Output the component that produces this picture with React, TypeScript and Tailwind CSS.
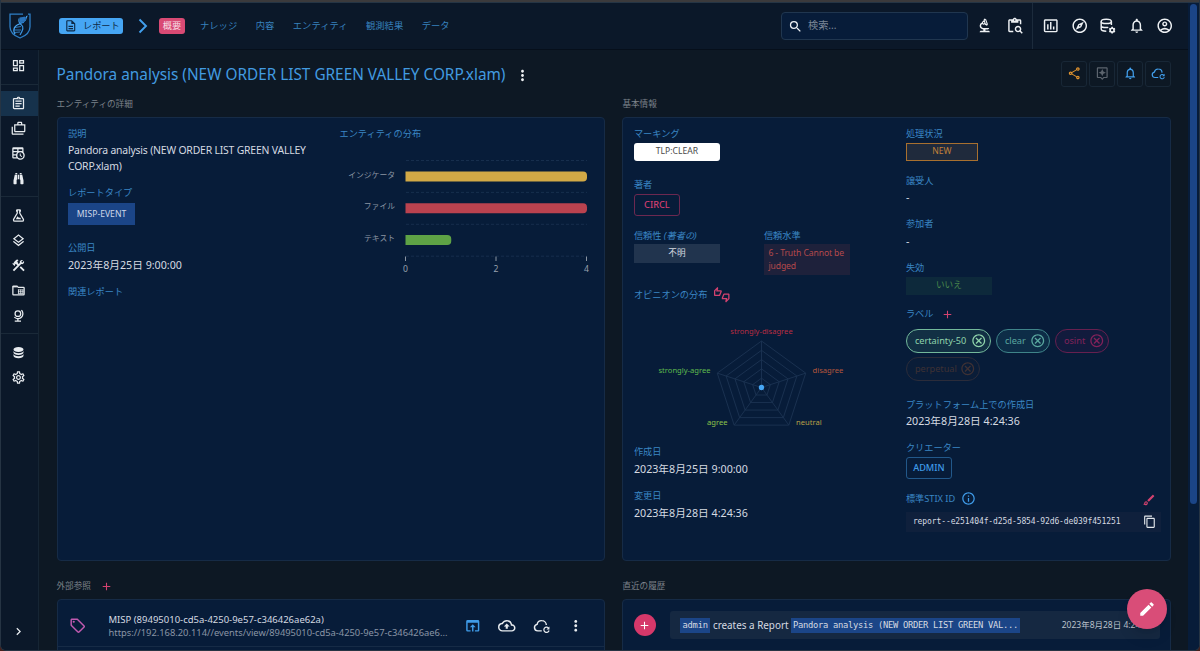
import React from 'react';
import {
  MdAdd,
  MdChevronRight,
  MdConstruction,
  MdContentCopy,
  MdEdit,
  MdInsertChartOutlined,
  MdMoreVert,
  MdOpenInBrowser,
  MdOutlineAccountCircle,
  MdOutlineAssignment,
  MdOutlineAssistant,
  MdOutlineBiotech,
  MdOutlineBrush,
  MdOutlineCancel,
  MdOutlineCases,
  MdOutlineCloudUpload,
  MdOutlineContentPasteSearch,
  MdOutlineDashboard,
  MdOutlineDescription,
  MdOutlineExplore,
  MdOutlineInfo,
  MdOutlineLayers,
  MdOutlineLocalOffer,
  MdOutlineNotifications,
  MdOutlineSettings,
  MdOutlineShare,
  MdOutlineThumbsUpDown,
  MdSearch,
} from 'react-icons/md';

type IconProps = { className?: string };
type BoxProps = { className?: string; children?: React.ReactNode };

const PathIcon = ({ d, className }: IconProps & { d: string }) => (
  <svg viewBox="0 0 24 24" fill="currentColor" className={className}>
    <path d={d} />
  </svg>
);

const Timetable = (props: IconProps) => (
  <PathIcon
    {...props}
    d="M14,12H15.5V14.82L17.94,16.23L17.19,17.53L14,15.69V12M4,2H18A2,2 0 0,1 20,4V10.1C21.24,11.36 22,13.09 22,15A7,7 0 0,1 15,22C13.09,22 11.36,21.24 10.1,20H4A2,2 0 0,1 2,18V4A2,2 0 0,1 4,2M4,15V18H8.67C8.24,17.09 8,16.07 8,15H4M4,8H10V5H4V8M18,8V5H12V8H18M4,13H8.29C8.63,11.85 9.26,10.82 10.1,10H4V13M15,10.15A4.85,4.85 0 0,0 10.15,15C10.15,17.68 12.32,19.85 15,19.85A4.85,4.85 0 0,0 19.85,15C19.85,12.32 17.68,10.15 15,10.15Z"
  />
);

const Binoculars = (props: IconProps) => (
  <PathIcon
    {...props}
    d="M11,6H13V13H11V6M9,20A1,1 0 0,1 8,21H5A1,1 0 0,1 4,20V15L6,6H10V13A1,1 0 0,1 9,14V20M10,5H7V3H10V5M15,20V14A1,1 0 0,1 14,13V6H18L20,15V20A1,1 0 0,1 19,21H16A1,1 0 0,1 15,20M14,5V3H17V5H14Z"
  />
);

const Flask = (props: IconProps) => (
  <PathIcon
    {...props}
    d="M5,19A1,1 0 0,0 6,20H18A1,1 0 0,0 19,19C19,18.79 18.93,18.59 18.82,18.43L13,8.35V4H11V8.35L5.18,18.43C5.07,18.59 5,18.79 5,19M6,22A3,3 0 0,1 3,19C3,18.4 3.18,17.84 3.5,17.37L9,7.81V6A1,1 0 0,1 8,5V4A2,2 0 0,1 10,2H14A2,2 0 0,1 16,4V5A1,1 0 0,1 15,6V7.81L20.5,17.37C20.82,17.84 21,18.4 21,19A3,3 0 0,1 18,22H6M13,16L14.34,14.66L16.27,18H7.73L10.39,13.39L13,16Z"
  />
);

const GlobeModel = (props: IconProps) => (
  <PathIcon
    {...props}
    d="M17.36,2.64L15.95,4.06C17.26,5.37 18,7.14 18,9A7,7 0 0,1 11,16C9.15,16 7.37,15.26 6.06,13.95L4.64,15.36C6.08,16.8 7.97,17.71 10,17.93V20H6V22H16V20H12V17.94C16.55,17.43 20,13.58 20,9C20,6.62 19.05,4.33 17.36,2.64M11,3.5A5.5,5.5 0 0,0 5.5,9A5.5,5.5 0 0,0 11,14.5A5.5,5.5 0 0,0 16.5,9A5.5,5.5 0 0,0 11,3.5M11,5.5C12.94,5.5 14.5,7.07 14.5,9A3.5,3.5 0 0,1 11,12.5A3.5,3.5 0 0,1 7.5,9A3.5,3.5 0 0,1 11,5.5Z"
  />
);

const Database = (props: IconProps) => (
  <PathIcon
    {...props}
    d="M12,3C7.58,3 4,4.79 4,7C4,9.21 7.58,11 12,11C16.42,11 20,9.21 20,7C20,4.79 16.42,3 12,3M4,9V12C4,14.21 7.58,16 12,16C16.42,16 20,14.21 20,12V9C20,11.21 16.42,13 12,13C7.58,13 4,11.21 4,9M4,14V17C4,19.21 7.58,21 12,21C16.42,21 20,19.21 20,17V14C20,16.21 16.42,18 12,18C7.58,18 4,16.21 4,14Z"
  />
);

const FolderTable = ({ className }: IconProps) => (
  <svg viewBox="0 0 24 24" fill="none" stroke="currentColor" strokeWidth="2" className={className}>
    <path d="M3 18V6a1 1 0 0 1 1-1h5.6l2 2H20a1 1 0 0 1 1 1v10a1 1 0 0 1-1 1H4a1 1 0 0 1-1-1z" />
    <path d="M2.5 6h7" />
    <path d="M12 10.5v6.5M15.5 10.5v6.5M19 10.5v6.5M11 11h9M11 14h9M11 17h9" strokeWidth="1.3" />
  </svg>
);

const DatabaseCog = ({ className }: IconProps) => (
  <svg viewBox="0 0 24 24" fill="none" stroke="currentColor" strokeWidth="2" className={className}>
    <ellipse cx="10" cy="6" rx="7" ry="3" />
    <path d="M3 6v10.5c0 1.6 3 3 7 3M17 6v5M3 11.5c0 1.6 3 3 7 3 1 0 2-.1 2.8-.3" />
    <circle cx="18" cy="18" r="2.6" />
    <path
      d="M18 13.5v2M18 20.5v2M14.1 15.75l1.7 1M20.2 19.25l1.7 1M14.1 20.25l1.7-1M20.2 16.75l1.7-1"
      strokeWidth="2.2"
    />
  </svg>
);

const CloudRefresh = ({ className }: IconProps) => (
  <svg viewBox="0 0 24 24" fill="none" stroke="currentColor" strokeWidth="2" className={className}>
    <path d="M12 19H6.5a4.5 4.5 0 0 1-.9-8.900A6.3 6.3 0 0 1 12 5a6.3 6.3 0 0 1 6.3 6" />
    <path d="M21.3 15.3A3.6 3.6 0 1 0 22 18.5" strokeWidth="1.7" />
    <path d="M22.5 13v4h-4z" fill="currentColor" stroke="none" />
  </svg>
);

const Logo = () => (
  <svg viewBox="0 0 22 26" fill="none" className="h-[26px] w-[22px]">
    <path d="M14 1.2H1v12.600C1 19 5.5 23 11 25c5.5-2 10-6 10-11.200V1.2h-2" stroke="#2f7fc6" strokeWidth="1.3" />
    <path d="M18.5 3C17 3 17.5 5 16 7.5c-1.5 3-8.5 3-10.5 7-1.2 2.5-.7 4.5.5 6.5" stroke="#4aa8f5" strokeWidth="1.2" />
    <path d="M10 5.5c-.5 3 .3 5 2.5 6.5s1 6-1.5 10" stroke="#3a93df" strokeWidth="1.2" />
    <path d="M10.5 5l5-1.5c1.5.5 2 2 1.5 3.5L14 10.5l-3-1z" fill="#1f5fa3" />
    <path d="M10.5 5h6M10.5 7h6M11 9l4 .3M6 14.5l6-1M5 17h7M5.5 19.5l5.5-.5" stroke="#3a93df" strokeWidth=".8" />
  </svg>
);

const Label = ({ className = '', children }: BoxProps) => (
  <h3 className={`h-3.5 whitespace-nowrap text-[9.2px] leading-[14px] text-[#3a86c4] ${className}`}>{children}</h3>
);

const Value = ({ className = '', children }: BoxProps) => (
  <div className={`h-4 whitespace-nowrap text-[10.7px] leading-4 text-[#d5dae1] ${className}`}>{children}</div>
);

const Card = ({ className = '', children }: BoxProps) => (
  <div className={`rounded-[4px] border border-[#162b46] bg-[#071c39] ${className}`}>{children}</div>
);

const SectionTitle = ({ children }: BoxProps) => (
  <h2 className="flex h-4 items-center text-[8.6px] leading-4 text-[#7c828a]">{children}</h2>
);

const navGroups = [
  {
    className: 'h-[34px] pt-[3px]',
    items: [{ icon: MdOutlineDashboard }],
  },
  {
    className: 'h-[112px] border-t border-[#1a2938] pt-[6px]',
    items: [
      { icon: MdOutlineAssignment, active: true },
      { icon: MdOutlineCases },
      { icon: Timetable },
      { icon: Binoculars },
    ],
  },
  {
    className: 'h-[137px] border-t border-[#1a2938] pt-[6px]',
    items: [
      { icon: Flask },
      { icon: MdOutlineLayers },
      { icon: MdConstruction },
      { icon: FolderTable },
      { icon: GlobeModel },
    ],
  },
  {
    className: 'border-t border-[#1a2938] pt-[6px]',
    items: [{ icon: Database }, { icon: MdOutlineSettings }],
  },
] as { className: string; items: { icon: React.ElementType; active?: boolean }[] }[];

const tabs = ['ナレッジ', '内容', 'エンティティ', '観測結果', 'データ'];

const Header = () => (
  <header className="flex h-[47px] shrink-0 items-center border-b border-[#060f1b] bg-[#0b1829]">
    <div className="ml-[8px] w-[50px]">
      <Logo />
    </div>
    <div className="flex h-4 w-[64px] items-center rounded-[3px] bg-[#46a6f4] pl-[4.5px] text-[9.2px] text-[#0d2946]">
      <MdOutlineDescription className="mr-1.5 size-[13.5px]" />
      レポート
    </div>
    <svg viewBox="0 0 10 16" fill="none" className="ml-[15px] h-4 w-2.5">
      <path d="M1.5 1.5L8 8l-6.5 6.5" stroke="#42a0ee" strokeWidth="1.9" />
    </svg>
    <div className="ml-[11px] flex h-4 w-[26px] items-center justify-center rounded-[3px] bg-[#d94a74] text-[9.2px] text-[#f6dce4]">
      概要
    </div>
    <nav className="ml-[15px] flex gap-[18.5px] text-[9.3px] text-[#3781bd]">
      {tabs.map((tab) => (
        <span key={tab}>{tab}</span>
      ))}
    </nav>
    <div className="ml-auto flex h-7 w-[187px] items-center rounded-[4px] border border-[#20364f] bg-[#071c39] pl-[6px] text-[10.2px] text-[#7b8797]">
      <MdSearch className="mr-[5px] size-[15px] text-[#eef1f4]" />
      検索...
    </div>
    <div className="ml-[8px] flex items-center gap-[12px] pr-[9px] text-[#eef1f4]">
      <MdOutlineBiotech className="size-[17.5px]" />
      <MdOutlineContentPasteSearch className="size-[17.5px]" />
    </div>
    <div className="flex h-[46px] items-center gap-[11px] border-l border-[#1c2b3c] pr-[14.5px] pl-[9px] text-[#eef1f4]">
      <MdInsertChartOutlined className="size-[17.5px]" />
      <MdOutlineExplore className="size-[17.5px]" />
      <DatabaseCog className="size-[17.5px]" />
      <MdOutlineNotifications className="size-[17.5px]" />
      <MdOutlineAccountCircle className="size-[17.5px]" />
    </div>
  </header>
);

const Sidebar = () => (
  <aside className="flex w-[38px] shrink-0 flex-col border-r border-[#162534] bg-[#0b1829] text-[#e8ecf0]">
    {navGroups.map((group, i) => (
      <div key={i} className={group.className}>
        {group.items.map(({ icon: Icon, active }, j) => (
          <div key={j} className={`flex h-[25.1px] items-center justify-center pr-[2px] ${active ? 'bg-[#16324c]' : ''}`}>
            <Icon className="size-[15px]" />
          </div>
        ))}
      </div>
    ))}
    <div className="mt-auto mb-[11px] flex justify-center pr-[2px]">
      <MdChevronRight className="size-[15px]" />
    </div>
  </aside>
);

const bars = [
  { name: 'インジケータ', value: 4, color: '#d2a946' },
  { name: 'ファイル', value: 4, color: '#ba424f' },
  { name: 'テキスト', value: 1, color: '#5ea245' },
];

const DistributionChart = () => (
  <svg width="254" height="136" viewBox="0 0 254 136" className="mt-1 block">
    {[0, 1, 2, 3].map((i) => (
      <line key={i} x1="66" x2="247" y1={15.5 + i * 31.9} y2={15.5 + i * 31.9} stroke="#172e4d" strokeDasharray="3 2" />
    ))}
    {bars.map((bar, i) => {
      const w = bar.value * 45.25;
      const y = 26.5 + i * 31.8;
      return (
        <g key={bar.name}>
          <text x="55" y={y + 6} textAnchor="end" fontSize="7.8" fill="#8b95a3">{bar.name}</text>
          <path d={`M65.5 ${y}h${w - 3.5}q4 0 4 4v2q0 4 -4 4h-${w - 3.5}z`} fill={bar.color} />
        </g>
      );
    })}
    {[0, 2, 4].map((n) => (
      <g key={n}>
        <line x1={65.5 + n * 45.25} x2={65.5 + n * 45.25} y1="111.5" y2="116" stroke="#8b95a3" />
        <text x={65.5 + n * 45.25} y="127" textAnchor="middle" fontSize="8.6" fill="#98a2ae">{n}</text>
      </g>
    ))}
  </svg>
);

const radarLabels = [
  { name: 'strongly-disagree', x: 127.5, y: 29, anchor: 'middle', color: '#b92d43' },
  { name: 'disagree', x: 178.5, y: 68, anchor: 'start', color: '#b5573c' },
  { name: 'neutral', x: 162, y: 120, anchor: 'start', color: '#b9a048' },
  { name: 'agree', x: 93.5, y: 120, anchor: 'end', color: '#8bc34a' },
  { name: 'strongly-agree', x: 76.5, y: 68, anchor: 'end', color: '#5fbb4e' },
] as const;

const radarPoint = (i: number, r: number) => {
  const a = ((-90 + i * 72) * Math.PI) / 180;
  return `${127.5 + r * Math.cos(a)},${82.5 + r * Math.sin(a)}`;
};

const OpinionRadar = () => (
  <svg width="256" height="143" viewBox="0 0 256 143" className="block">
    <g stroke="#1c3352" strokeWidth="0.9" fill="none">
      {[1, 2, 3, 4, 5].map((n) => (
        <polygon key={n} points={[0, 1, 2, 3, 4].map((i) => radarPoint(i, n * 9.3)).join(' ')} />
      ))}
      {[0, 1, 2, 3, 4].map((i) => (
        <polyline key={i} points={`127.5,82.5 ${radarPoint(i, 46.5)}`} />
      ))}
    </g>
    <circle cx="127.5" cy="82.5" r="2.7" fill="#46a6f4" />
    {radarLabels.map((l) => (
      <text key={l.name} x={l.x} y={l.y} textAnchor={l.anchor} fontSize="7.6" fill={l.color}>{l.name}</text>
    ))}
  </svg>
);

const labels = [
  { name: 'certainty-50', className: 'w-[85px] border-[#73b99b] bg-[#123044] text-[#8fd3ab]' },
  { name: 'clear', className: 'w-[54px] border-[#3f8489] bg-[#0d2d47] text-[#5aa79f]' },
  { name: 'osint', className: 'w-[54px] border-[#66204f] bg-[#121b3d] text-[#82225a]' },
  { name: 'perpetual', className: 'w-[74px] border-[#2b2c3a] bg-[#0a1d38] text-[#3e3134]' },
];

const EntityDetails = () => (
  <Card className="flex h-[444px] pt-[9px] pl-[10.5px]">
    <div className="w-[271.5px]">
      <Label>説明</Label>
      <p className="mt-0.5 w-[250px] text-[10.4px] leading-[15.5px] tracking-[-0.18px] text-[#d5dae1]">
        Pandora analysis (NEW ORDER LIST GREEN VALLEY CORP.xlam)
      </p>
      <Label className="mt-3">レポートタイプ</Label>
      <div className="mt-[3px] flex h-[22px] w-[67px] items-center justify-center bg-[#1b4587] text-[8.6px] text-[#ccd7e8]">
        MISP-EVENT
      </div>
      <Label className="mt-4">公開日</Label>
      <Value className="mt-0.5">2023年8月25日 9:00:00</Value>
      <Label className="mt-3">関連レポート</Label>
    </div>
    <div>
      <Label>エンティティの分布</Label>
      <DistributionChart />
    </div>
  </Card>
);

const BasicInformation = () => (
  <Card className="flex h-[444px] pt-[9px] pl-[10.5px]">
    <div className="w-[272px]">
      <Label>マーキング</Label>
      <div className="mt-[1.5px] flex h-[18px] w-[86px] items-center justify-center rounded-[3px] bg-white text-[8.6px] text-[#4a4a4a]">
        TLP:CLEAR
      </div>
      <Label className="mt-[17.5px]">著者</Label>
      <div className="mt-0.5 flex h-[22px] w-[46px] items-center justify-center rounded-[3px] border border-[#6c2850] text-[9.2px] font-medium text-[#cf3e70]">
        CIRCL
      </div>
      <div className="mt-[13px] flex h-[59px]">
        <div className="w-[130px]">
          <Label>信頼性 <i>(著者の)</i></Label>
          <div className="mt-px flex h-[19px] w-[86px] items-center justify-center bg-[#21344e] text-[8.6px] text-[#d5dae1]">
            不明
          </div>
        </div>
        <div>
          <Label>信頼水準</Label>
          <div className="mt-px h-[31px] w-[86px] bg-[#1e213b] pt-[3px] pl-[4.5px] text-[8.6px] leading-[13px] tracking-[-0.1px] text-[#b5494b]">
            6 - Truth Cannot be judged
          </div>
        </div>
      </div>
      <div className="flex h-3.5 items-center">
        <Label>オピニオンの分布</Label>
        <MdOutlineThumbsUpDown className="ml-[7px] size-[15.5px] text-[#d3426f]" />
      </div>
      <div className="mt-[3px] h-[140px]">
        <OpinionRadar />
      </div>
      <Label>作成日</Label>
      <Value className="mt-0.5">2023年8月25日 9:00:00</Value>
      <Label className="mt-3">変更日</Label>
      <Value className="mt-0.5">2023年8月28日 4:24:36</Value>
    </div>
    <div className="w-[255px]">
      <Label>処理状況</Label>
      <div className="mt-[1.5px] flex h-[18px] w-[72px] items-center justify-center border border-[#a8702f] bg-[#1f2a3c] text-[8.6px] text-[#c0803a]">
        NEW
      </div>
      <Label className="mt-[13px]">譲受人</Label>
      <Value className="mt-[1.5px]">-</Value>
      <Label className="mt-3">参加者</Label>
      <Value className="mt-0.5">-</Value>
      <Label className="mt-3">失効</Label>
      <div className="mt-[1.5px] flex h-[18px] w-[86px] items-center justify-center bg-[#0d293b] text-[8.6px] text-[#4c8a4c]">
        いいえ
      </div>
      <div className="mt-[12.5px] flex h-3.5 items-center">
        <Label>ラベル</Label>
        <MdAdd className="ml-[8px] size-[13px] text-[#d3426f]" />
      </div>
      <div className="mt-2 flex flex-wrap gap-x-[5px] gap-y-[4.5px]">
        {labels.map((label) => (
          <div
            key={label.name}
            className={`flex h-[23.5px] items-center justify-between rounded-full border pr-[3px] pl-2 text-[9.2px] ${label.className}`}
          >
            {label.name}
            <MdOutlineCancel className="size-[15.5px]" />
          </div>
        ))}
      </div>
      <Label className="mt-[17px]">プラットフォーム上での作成日</Label>
      <Value className="mt-[1.5px]">2023年8月28日 4:24:36</Value>
      <Label className="mt-[11.5px]">クリエーター</Label>
      <div className="mt-0.5 flex h-[22px] w-[46px] items-center justify-center rounded-[3px] border border-[#22588a] text-[9.2px] font-medium text-[#3f9be8]">
        ADMIN
      </div>
      <div className="mt-[13px] flex h-3.5 items-center">
        <Label>標準STIX ID</Label>
        <MdOutlineInfo className="ml-[6px] size-[15px] text-[#3f9be8]" />
        <MdOutlineBrush className="mt-[3px] mr-[5px] ml-auto size-[14px] text-[#d3426f]" />
      </div>
      <div className="mt-[6px] flex h-5 items-center justify-between bg-[#0f203c] pr-[4px] pl-[7px]">
        <code className="font-['DejaVu_Sans_Mono',monospace] text-[8px] tracking-[-0.1px] text-[#d5dae1]">
          report--e251404f-d25d-5854-92d6-de039f451251
        </code>
        <MdContentCopy className="size-[13.5px] text-[#e3e7ec]" />
      </div>
    </div>
  </Card>
);

const ExternalReferences = () => (
  <Card className="h-20">
    <div className="flex h-[47px] items-center border-b border-[#162b46] pt-[5px] pr-[19.5px] pl-[11px]">
      <MdOutlineLocalOffer className="size-[17.5px] text-[#c05ab0]" />
      <div className="ml-[22.5px] w-[344px] whitespace-nowrap">
        <div className="text-[9.5px] leading-[13px] text-[#d5dae1]">MISP (89495010-cd5a-4250-9e57-c346426ae62a)</div>
        <div className="text-[9.35px] leading-[13px] text-[#8a95a5]">
          https://192.168.20.114//events/view/89495010-cd5a-4250-9e57-c346426ae6...
        </div>
      </div>
      <div className="ml-auto flex items-center gap-[17px] pt-px text-[#e8ecf0]">
        <MdOpenInBrowser className="size-[17.5px] text-[#3f9be8]" />
        <MdOutlineCloudUpload className="size-[17.5px]" />
        <CloudRefresh className="size-[17.5px]" />
        <MdMoreVert className="size-[17.5px]" />
      </div>
    </div>
  </Card>
);

const RecentHistory = () => (
  <Card className="h-20 pt-[11px] pr-[10px] pl-[10.5px]">
    <div className="flex items-center">
      <div className="flex size-[22px] items-center justify-center rounded-full bg-[#d6386a] text-white">
        <MdAdd className="size-[13px]" />
      </div>
      <div className="ml-[14px] flex h-7 grow items-center rounded-[3px] bg-[#152841] pr-2 pl-[10px] text-[9.9px] whitespace-nowrap text-[#d5dae1]">
        <code className="bg-[#1b4587] px-[2.5px] font-['DejaVu_Sans_Mono',monospace] text-[8.8px] leading-[15px] tracking-[-0.2px]">
          admin
        </code>
        <span className="mx-[2.5px]">creates a Report</span>
        <code className="bg-[#1b4587] px-[2px] font-['DejaVu_Sans_Mono',monospace] text-[8.8px] leading-[15px] tracking-[-0.3px]">
          Pandora analysis (NEW ORDER LIST GREEN VAL...
        </code>
        <span className="ml-auto text-[8.5px] text-[#b9c1cb]">2023年8月28日 4:24:36</span>
      </div>
    </div>
  </Card>
);

const App: React.FC = () => {
  return (
    <div className="h-[651px] w-[1200px] overflow-hidden bg-[#47201c] font-['Noto_Sans','Noto_Sans_CJK_JP',sans-serif]">
      <div className="relative flex h-[651px] flex-col overflow-hidden rounded-b-[6px] border border-t-0 border-[#263443] bg-[#0d1824]">
        <div className="h-[3px] shrink-0 border-b border-[#253545] bg-[#3b3a3c]" />
        <div className="flex min-h-0 grow">
          <div className="flex min-w-0 grow flex-col">
            <Header />
            <div className="flex min-h-0 grow">
              <Sidebar />
              <main className="min-w-0 grow overflow-hidden pt-[10px] pr-[16.7px] pl-[17.5px]">
                <div className="flex h-[27px] items-center">
                  <h1 className="pt-[3px] text-[15.35px] whitespace-nowrap text-[#429be0]">
                    Pandora analysis (NEW ORDER LIST GREEN VALLEY CORP.xlam)
                  </h1>
                  <MdMoreVert className="mt-[3px] ml-[9px] size-[17px] text-[#eef1f4]" />
                  <div className="ml-auto flex gap-[2px]">
                    <div className="flex size-[26px] items-center justify-center rounded-[3px] border border-[#182736]">
                      <MdOutlineShare className="size-[14.5px] text-[#e0932f]" />
                    </div>
                    <div className="flex size-[26px] items-center justify-center rounded-[3px] border border-[#182736]">
                      <MdOutlineAssistant className="size-[14.5px] text-[#5c646e]" />
                    </div>
                    <div className="flex size-[26px] items-center justify-center rounded-[3px] border border-[#182736]">
                      <MdOutlineNotifications className="size-[14.5px] text-[#42a0ee]" />
                    </div>
                    <div className="flex size-[26px] items-center justify-center rounded-[3px] border border-[#182736]">
                      <CloudRefresh className="size-[14.5px] text-[#42a0ee]" />
                    </div>
                  </div>
                </div>
                <div className="mt-[9px] grid grid-cols-2 gap-x-[17px]">
                  <section>
                    <SectionTitle>エンティティの詳細</SectionTitle>
                    <div className="mt-[5px]">
                      <EntityDetails />
                    </div>
                  </section>
                  <section>
                    <SectionTitle>基本情報</SectionTitle>
                    <div className="mt-[5px]">
                      <BasicInformation />
                    </div>
                  </section>
                  <section className="mt-[17px]">
                    <SectionTitle>
                      外部参照
                      <MdAdd className="ml-[9px] size-[13px] text-[#d3426f]" />
                    </SectionTitle>
                    <div className="mt-[5px]">
                      <ExternalReferences />
                    </div>
                  </section>
                  <section className="mt-[17px]">
                    <SectionTitle>直近の履歴</SectionTitle>
                    <div className="mt-[5px]">
                      <RecentHistory />
                    </div>
                  </section>
                </div>
              </main>
            </div>
          </div>
          <div className="w-[11px] shrink-0 bg-[#071c39] pt-px pl-[2px]">
            <div className="h-[500px] w-[7px] rounded-full bg-[#1b4587]" />
          </div>
        </div>
        {/* Floating edit button */}
        <button className="absolute right-[32px] bottom-[21px] flex size-10 items-center justify-center rounded-full bg-[#d94d78] text-white shadow-lg">
          <MdEdit className="size-[18px]" />
        </button>
      </div>
    </div>
  );
};

export default App;
